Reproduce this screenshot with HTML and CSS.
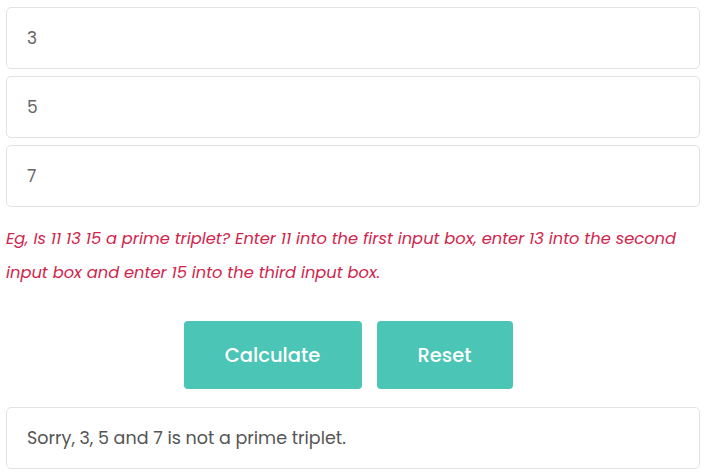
FILE: index.html
```html
<!DOCTYPE html>
<html lang="en">

<head>
	<meta charset="utf-8">
	<title>Prime triplet calculator</title>
	<link rel="stylesheet" href="styles.css">
</head>

<body>
	<div class="regner">
		<input class="felt" type="text" value="3">
		<input class="felt" type="text" value="5">
		<input class="felt" type="text" value="7">

		<p class="note">Eg, Is 11 13 15 a prime triplet? Enter 11 into the first input box, enter 13 into the second input box and enter 15 into the third input box.</p>

		<div class="knapper">
			<button class="knap beregn">Calculate</button>
			<button class="knap nulstil">Reset</button>
		</div>

		<div class="resultat">Sorry, 3, 5 and 7 is not a prime triplet.</div>
	</div>
</body>

</html>
```

FILE: styles.css
```css
body {
	margin: 0;
	background: #fff;
	font-family: 'Poppins', 'Open Sans', sans-serif;
}

.regner {
	padding: 7px 8px 0 6px;
}

.felt {
	display: block;
	box-sizing: border-box;
	width: 100%;
	height: 62px;
	margin: 0 0 7px 0;
	padding: 0 20px;
	border: 1px solid #e2e2e2;
	border-radius: 5px;
	font-family: inherit;
	font-size: 17px;
	color: #666;
	outline: none;
}

.note {
	margin: 15px 0 0 0;
	font-size: 16.3px;
	font-style: italic;
	line-height: 34px;
	color: #d0264d;
}

.knapper {
	display: flex;
	justify-content: center;
	gap: 15px;
	margin-top: 31px;
	padding-right: 10px;
}

.knap {
	height: 68px;
	border: none;
	border-radius: 4px;
	background-color: #4bc5b5;
	color: #fff;
	font-family: inherit;
	font-size: 19.5px;
	font-weight: 500;
	cursor: pointer;
}

.beregn {
	width: 178px;
}

.nulstil {
	width: 136px;
}

.resultat {
	box-sizing: border-box;
	height: 62px;
	margin-top: 18px;
	padding: 0 20px;
	display: flex;
	align-items: center;
	border: 1px solid #e2e2e2;
	border-radius: 5px;
	font-size: 17.5px;
	color: #555;
}
```
